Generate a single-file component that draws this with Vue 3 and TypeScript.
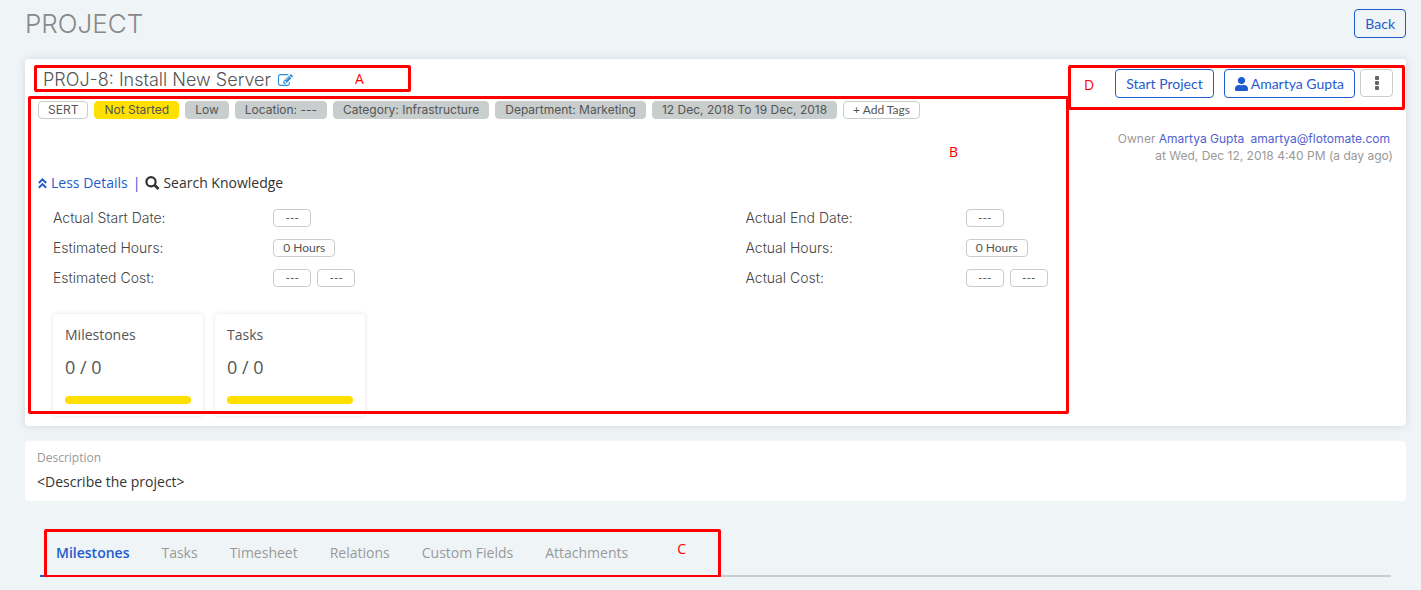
<script setup lang="ts">
interface Tag { text: string; kind: 'outline' | 'status' | 'plain' }
interface Field { label: string; values: string[] }

const tags: Tag[] = [
  { text: 'SERT', kind: 'outline' },
  { text: 'Not Started', kind: 'status' },
  { text: 'Low', kind: 'plain' },
  { text: 'Location: ---', kind: 'plain' },
  { text: 'Category: Infrastructure', kind: 'plain' },
  { text: 'Department: Marketing', kind: 'plain' },
  { text: '12 Dec, 2018 To 19 Dec, 2018', kind: 'plain' },
]

const columns: Field[][] = [
  [
    { label: 'Actual Start Date:', values: ['---'] },
    { label: 'Estimated Hours:', values: ['0 Hours'] },
    { label: 'Estimated Cost:', values: ['---', '---'] },
  ],
  [
    { label: 'Actual End Date:', values: ['---'] },
    { label: 'Actual Hours:', values: ['0 Hours'] },
    { label: 'Actual Cost:', values: ['---', '---'] },
  ],
]

const stats = [
  { name: 'Milestones', value: '0 / 0' },
  { name: 'Tasks', value: '0 / 0' },
]

const tabs = ['Milestones', 'Tasks', 'Timesheet', 'Relations', 'Custom Fields', 'Attachments']
</script>

<template>
  <div class="page">
    <header class="page-head">
      <h1>PROJECT</h1>
      <button class="btn" type="button">Back</button>
    </header>

    <section class="card project">
      <div class="top">
        <div class="summary">
          <h2>
            PROJ-8: Install New Server
            <button class="icon-btn" type="button" aria-label="Edit title">
              <svg width="15" height="14" viewBox="0 0 1792 1664" fill="#2a8ad4">
                <path d="M888 1184l116-116-152-152-116 116v56h96v96h56zm440-720q-16-16-33 1l-350 350q-17 17-1 33t33-1l350-350q17-17 1-33zm80 594v190q0 119-84.500 203.500t-203.500 84.500h-832q-119 0-203.500-84.500t-84.500-203.500v-832q0-119 84.500-203.500t203.500-84.500h832q63 0 117 25 15 7 18 23 3 17-9 29l-49 49q-14 14-32 8-23-6-45-6h-832q-66 0-113 47t-47 113v832q0 66 47 113t113 47h832q66 0 113-47t47-113v-126q0-13 9-22l64-64q15-15 35-7t20 29zm-96-738l288 288-672 672h-288v-288zm444 132l-92 92-288-288 92-92q28-28 68-28t68 28l152 152q28 28 28 68t-28 68z" />
              </svg>
            </button>
          </h2>
          <div class="tags">
            <span v-for="tag in tags" :key="tag.text" class="tag" :class="tag.kind">{{ tag.text }}</span>
            <button class="chip" type="button">+ Add Tags</button>
          </div>
        </div>

        <div class="side">
          <div class="actions">
            <button class="btn" type="button">Start Project</button>
            <button class="btn user" type="button">
              <svg width="13" height="14" viewBox="0 0 448 512" preserveAspectRatio="none" fill="currentColor">
                <path d="M224 256c70.700 0 128-57.300 128-128S294.700 0 224 0 96 57.300 96 128s57.300 128 128 128zm89.600 32h-16.700c-22.200 10.200-46.900 16-72.900 16s-50.600-5.800-72.900-16h-16.700C60.200 288 0 348.200 0 422.400V464c0 26.500 21.500 48 48 48h352c26.500 0 48-21.500 48-48v-41.600c0-74.200-60.200-134.400-134.400-134.400z" />
              </svg>
              Amartya Gupta
            </button>
            <button class="btn more" type="button" aria-label="More actions">
              <svg width="4" height="14" viewBox="0 0 4 14" fill="#666">
                <rect width="4" height="4" rx="1" /><rect y="5" width="4" height="4" rx="1" /><rect y="10" width="4" height="4" rx="1" />
              </svg>
            </button>
          </div>
          <p class="owner">
            <span class="owner-line">Owner <a href="#">Amartya Gupta</a> <a class="mail" href="#">amartya@flotomate.com</a></span>
            <span>at Wed, Dec 12, 2018 4:40 PM (a day ago)</span>
          </p>
        </div>
      </div>

      <div class="links">
        <a class="less" href="#">
          <svg width="9" height="12" viewBox="0 0 9 12" fill="none" stroke="currentColor" stroke-width="2">
            <path d="M.8 6 4.500 2.300 8.200 6M.8 10.800l3.700-3.700 3.700 3.700" />
          </svg>
          Less Details
        </a>
        <span class="bar">|</span>
        <a class="search" href="#">
          <svg width="15" height="14" viewBox="0 0 15 14" fill="none" stroke="currentColor">
            <circle cx="6" cy="5.800" r="4.600" stroke-width="2.200" /><path d="m9.500 9 4 4" stroke-width="2.800" />
          </svg>
          Search Knowledge
        </a>
      </div>

      <div class="fields">
        <dl v-for="(column, i) in columns" :key="i">
          <div v-for="field in column" :key="field.label" class="field">
            <dt>{{ field.label }}</dt>
            <dd><button v-for="(value, j) in field.values" :key="j" class="chip" type="button">{{ value }}</button></dd>
          </div>
        </dl>
      </div>

      <div class="stats">
        <div v-for="stat in stats" :key="stat.name" class="stat">
          <span class="stat-name">{{ stat.name }}</span>
          <span class="stat-value">{{ stat.value }}</span>
          <span class="progress"></span>
        </div>
      </div>

      <div class="mark mark-a"><span>A</span></div>
      <div class="mark mark-b"><span>B</span></div>
      <div class="mark mark-d"><span>D</span></div>
    </section>

    <section class="card description">
      <h3>Description</h3>
      <p>&lt;Describe the project&gt;</p>
    </section>

    <nav class="tabs">
      <a v-for="(tab, i) in tabs" :key="tab" href="#" :class="{ active: i === 0 }">{{ tab }}</a>
      <div class="mark mark-c"><span>C</span></div>
    </nav>
  </div>
</template>

<style>
body {
  margin: 0;
  background: #eff4f7;
}
</style>

<style scoped>
* {
  box-sizing: border-box;
}
.page {
  padding: 0 15px 0 25px;
  font: 14px/20px "Open Sans", "Noto Sans", sans-serif;
  color: #555;
}
h1, h2, h3, p, dl, dd {
  margin: 0;
  font-weight: 400;
}
a {
  color: #1f5bcf;
  text-decoration: none;
}
button {
  font-family: inherit;
  cursor: pointer;
}
.page-head {
  display: flex;
  justify-content: space-between;
  align-items: center;
  height: 47px;
  margin-bottom: 12px;
}
h1 {
  font: 300 26px/36px Inter, sans-serif;
  color: #888;
}
.btn {
  display: inline-flex;
  align-items: center;
  justify-content: center;
  height: 29px;
  padding: 0 10px;
  border: 1px solid #1f5bcf;
  border-radius: 4px;
  background: #fff;
  color: #1f5bcf;
  font: 14px/20px Lato, sans-serif;
}
.page-head .btn {
  background: transparent;
}
.card {
  border-radius: 4px;
  background: #fff;
}
.project {
  position: relative;
  padding: 10px 13px 10px 13px;
  box-shadow: 0 0 8px rgba(0, 40, 60, 0.13);
}
.top {
  display: flex;
  justify-content: space-between;
  height: 104px;
}
h2 {
  display: flex;
  align-items: center;
  gap: 7px;
  height: 22px;
  margin: 0 0 10px 5px;
  font: 300 18px/22px Inter, sans-serif;
  color: #555;
}
.icon-btn {
  display: flex;
  padding: 0;
  border: 0;
  background: none;
}
.tags {
  display: flex;
  gap: 6px;
}
.tag, .chip {
  height: 18px;
  padding: 0 9px;
  border: 1px solid #c8cdcd;
  border-radius: 4px;
  background: #c8cdcd;
  font-size: 12px;
  line-height: 16px;
  color: #555;
  white-space: nowrap;
}
.tag {
  font-family: Inter, sans-serif;
}
.tag.status {
  border-color: #ffe000;
  background: #ffe000;
}
.tag.outline, .chip {
  background: #fff;
}
.chip {
  min-width: 38px;
  font-family: Lato, sans-serif;
}
.side {
  display: flex;
  flex-direction: column;
  align-items: flex-end;
}
.actions {
  display: flex;
}
.user {
  gap: 3px;
  margin: 0 5px 0 10px;
}
.more {
  width: 33px;
  height: 28px;
  border-color: #c8cdcd;
}
.owner {
  display: flex;
  flex-direction: column;
  align-items: flex-end;
  margin-top: 32px;
  font-family: Inter, sans-serif;
  font-size: 12px;
  line-height: 17px;
  color: #999;
}
.owner-line {
  padding-right: 3px;
}
.owner a {
  color: #5061d0;
}
.mail {
  margin-left: 3px;
}
.links {
  display: flex;
  align-items: center;
  gap: 5px;
}
.links a {
  display: flex;
  align-items: center;
  gap: 4px;
}
.bar {
  color: #1f5bcf;
}
.links .search {
  gap: 3px;
  color: #333;
}
.fields {
  display: grid;
  grid-template-columns: 1fr 1fr;
  gap: 32px;
  margin: 10px -13px 0 15px;
}
.field {
  display: grid;
  grid-template-columns: 1fr 2fr;
  align-items: center;
  height: 30px;
}
dt {
  font-family: Inter, sans-serif;
  font-weight: 300;
  color: #444;
}
dd {
  display: flex;
  gap: 6px;
}
.stats {
  display: flex;
  gap: 12px;
  margin: 21px 0 0 15px;
}
.stat {
  display: flex;
  flex-direction: column;
  width: 150px;
  height: 102px;
  padding: 11px 12px 12px;
  border-radius: 4px;
  box-shadow: 0 0 4px rgba(0, 30, 60, 0.13);
}
.stat-value {
  margin: 8px 0 15px;
  font-size: 18px;
  line-height: 28px;
}
.progress {
  height: 8px;
  border-radius: 4px;
  background: #ffe000;
}
.description {
  margin-top: 15px;
  padding: 8px 12px 9px;
}
h3 {
  margin-bottom: 5px;
  font-size: 12px;
  line-height: 18px;
  color: #999;
}
.description p {
  color: #333;
}
.tabs {
  position: relative;
  display: flex;
  margin: 29px 15px 0;
  border-bottom: 2px solid #c8cdcd;
}
.tabs a {
  height: 47px;
  margin-bottom: -2px;
  padding: 13px 16px 12px;
  border-bottom: 2px solid transparent;
  color: #999;
}
.tabs .active {
  border-color: #1f5bcf;
  color: #1f5bcf;
  font-weight: 600;
}
.mark {
  position: absolute;
  border: 3px solid #f00;
  border-radius: 2px;
  color: #f00;
  pointer-events: none;
}
.mark span {
  position: absolute;
}
.mark-a {
  top: 6px;
  left: 9px;
  width: 377px;
  height: 27px;
}
.mark-a span {
  top: 1px;
  left: 318px;
}
.mark-b {
  top: 37px;
  left: 3px;
  right: 337px;
  bottom: 12px;
}
.mark-b span {
  top: 43px;
  right: 108px;
}
.mark-c {
  top: -1px;
  left: 4px;
  width: 677px;
  height: 49px;
}
.mark-c span {
  top: 7px;
  right: 32px;
}
.mark-d {
  top: 6px;
  right: 1px;
  width: 337px;
  height: 45px;
}
.mark-d span {
  top: 7px;
  left: 13px;
}
</style>
